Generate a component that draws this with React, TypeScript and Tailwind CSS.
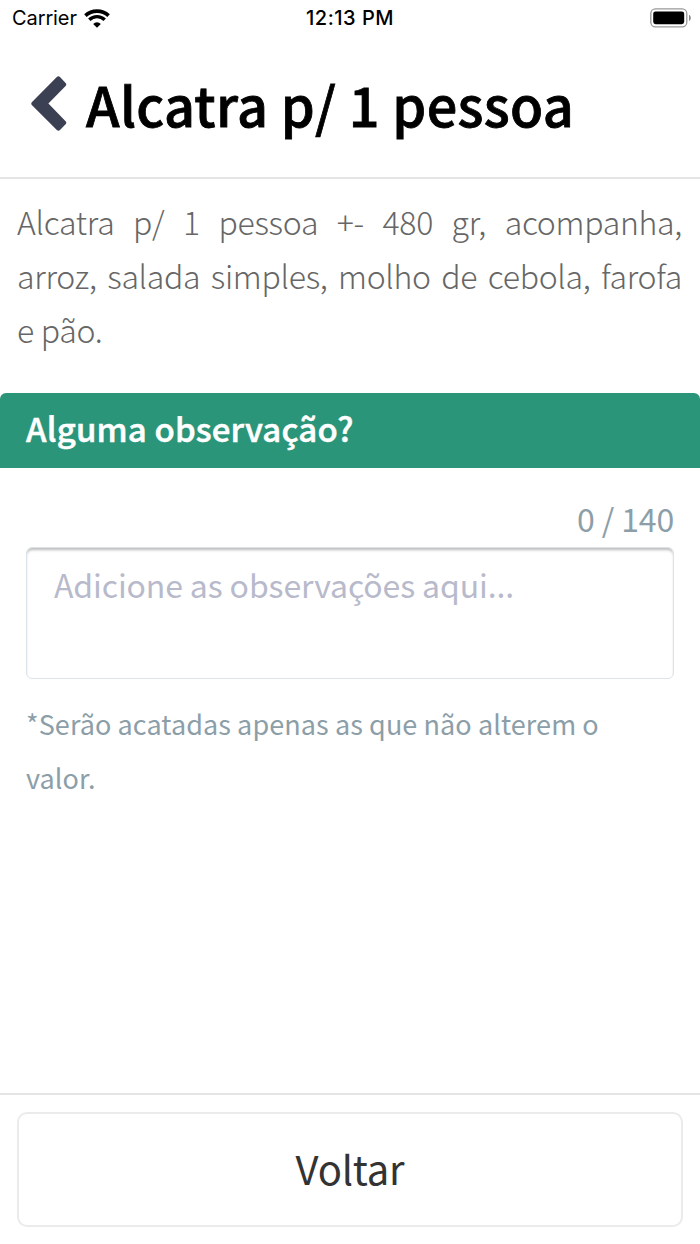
import { useState } from 'react'

const MAX_LENGTH = 140

function WifiIcon() {
  return (
    <svg width="26" height="19" viewBox="0 0 26 19" className="shrink-0" fill="none" stroke="#000">
      <path d="M1.4 6.6 A17 17 0 0 1 24.6 6.6" strokeWidth="3.7" />
      <path d="M5.3 10.8 A11 11 0 0 1 20.7 10.8" strokeWidth="3.4" />
      <path d="M9.2 14.9 A5.4 5.4 0 0 1 16.8 14.9 L13 18.7 Z" fill="#000" stroke="none" />
    </svg>
  )
}

function BatteryIcon() {
  return (
    <svg width="42" height="20" viewBox="0 0 42 20" className="shrink-0">
      <rect x="0.8" y="0.8" width="36" height="18" rx="4.6" fill="none" stroke="#999" strokeWidth="1.3" />
      <rect x="3.2" y="3.4" width="31" height="12.8" rx="2.4" fill="#000" />
      <path d="M39 6.7 C41.4 7.7 41.4 12 39 13 Z" fill="#8a8a8a" />
    </svg>
  )
}

function BackIcon() {
  return (
    <svg width="36" height="56" viewBox="0 0 36 56" className="shrink-0">
      <path
        d="M25.8 1.1 Q27.4 -0.4 29 1.1 L34.6 6.9 Q36 8.4 34.6 9.9 L17.4 27.6 L34.6 45.2 Q36 46.8 34.6 48.2 L29 54 Q27.4 55.4 25.8 54 L0.8 28.9 Q-0.3 27.6 0.8 26.2 Z"
        fill="#3c4053"
      />
    </svg>
  )
}

function StatusBar() {
  return (
    <div className="grid h-[35px] grid-cols-[1fr_auto_1fr] items-center pl-3 pr-2 font-['Inter','Liberation_Sans',sans-serif] text-black">
      <div className="flex items-center gap-[7px]">
        <span className="pt-px text-[20px] leading-[35px] tracking-[-0.1px]">Carrier</span>
        <WifiIcon />
      </div>
      <span className="pr-1 pt-px text-center text-[20px] font-medium leading-[35px] tracking-[0.5px]">12:13 PM</span>
      <div className="flex justify-end">
        <BatteryIcon />
      </div>
    </div>
  )
}

export default function App() {
  const [note, setNote] = useState('')

  return (
    <div className="flex h-[1244px] w-[700px] flex-col overflow-hidden bg-white font-['Noto_Sans_CJK_SC',sans-serif]">
      <StatusBar />

      {/* Header */}
      <header className="flex h-36 items-start border-b-2 border-[#e5e5e5] pl-[31px]">
        <button className="mt-[40.5px]" aria-label="Voltar">
          <BackIcon />
        </button>
        <h1 className="ml-[19px] mt-[33px] whitespace-nowrap text-[54px] font-medium leading-[72px] tracking-[0.3px] text-black [-webkit-text-stroke:0.8px_#000]">
          Alcatra p/ 1 pessoa
        </h1>
      </header>

      <main className="flex flex-1 flex-col">
        <p className="ml-[17px] mr-[18px] mt-[15px] text-justify text-[32px] font-light leading-[54px] tracking-[-0.3px] text-[#666]">
          Alcatra p/ 1 pessoa +- 480 gr, acompanha, arroz, salada simples, molho de cebola, farofa e pão.
        </p>

        <section className="mt-[37px]">
          <h2 className="h-[75px] rounded-t-md bg-[#2b957a] pl-[26px] text-[33px] font-medium leading-[70px] tracking-[0.15px] text-white [-webkit-text-stroke:0.5px_#fff]">
            Alguma observação?
          </h2>

          <div className="flex flex-col px-[26px] pt-[25px]">
            <span className="h-[54px] text-right text-[32px] leading-[51px] tracking-[-0.15px] text-[#8c9ea8]">
              {note.length} / {MAX_LENGTH}
            </span>
            <textarea
              value={note}
              maxLength={MAX_LENGTH}
              onChange={(e) => setNote(e.target.value)}
              placeholder="Adicione as observações aqui..."
              className="block h-[132px] w-full resize-none rounded-md border-[1.5px] border-[#dbe4e8] px-[27px] py-[9px] text-[32px] leading-[54px] tracking-[-0.13px] text-[#3c4053] shadow-[inset_0_3px_3px_-1px_#bbb] outline-none placeholder:text-[#b8bacb]"
            />
            <p className="mt-[18px] pr-4 text-[27px] leading-[54px] tracking-[0.08px] text-[#8c9ea8]">
              *Serão acatadas apenas as que não alterem o valor.
            </p>
          </div>
        </section>
      </main>

      {/* Bottom action */}
      <footer className="h-[151px] border-t-2 border-[#e5e5e5] px-[17px] pt-[17px]">
        <button className="flex h-[115px] w-full justify-center rounded-[10px] border-2 border-[#ebebeb] text-[40px] leading-[109px] tracking-[-0.2px] text-[#333]">
          Voltar
        </button>
      </footer>
    </div>
  )
}
